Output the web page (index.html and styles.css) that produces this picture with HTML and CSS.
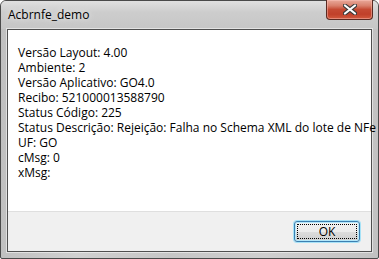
FILE: index.html
```html
<!DOCTYPE html>
<html>
<head>
<meta charset="utf-8">
<link rel="stylesheet" href="styles.css">
</head>
<body>
<div class="window">
  <div class="titlebar">
    <span class="title">Acbrnfe_demo</span>
    <div class="close">
      <svg width="14" height="11" viewBox="0 0 14 11">
        <path d="M2 1.5 L12 9.5 M12 1.5 L2 9.5" stroke="#3a3a3a" stroke-width="4.2" stroke-linecap="round"/>
        <path d="M2 1.5 L12 9.5 M12 1.5 L2 9.5" stroke="#ffffff" stroke-width="2.2" stroke-linecap="round"/>
      </svg>
    </div>
  </div>
  <div class="client">
    <div class="message">
      <div>Versão Layout: 4.00</div>
      <div>Ambiente: 2</div>
      <div>Versão Aplicativo: GO4.0</div>
      <div>Recibo: 521000013588790</div>
      <div>Status Código: 225</div>
      <div>Status Descrição: Rejeição: Falha no Schema XML do lote de NFe</div>
      <div>UF: GO</div>
      <div>cMsg: 0</div>
      <div>xMsg:</div>
    </div>
    <div class="footer">
      <button class="ok"><span class="focus">OK</span></button>
    </div>
  </div>
</div>
</body>
</html>
```
FILE: styles.css
```css
html, body {
  margin: 0;
  padding: 0;
  background: #ffffff;
}
body {
  width: 379px;
  height: 259px;
  overflow: hidden;
  font-family: "Open Sans", "Noto Sans", sans-serif;
  font-size: 12px;
  color: #000;
}
.window {
  box-sizing: border-box;
  width: 379px;
  height: 259px;
  border: 1px solid #4a4a4a;
  border-radius: 6px 6px 2px 2px;
  background: linear-gradient(90deg, #c0c0c0 0%, #d0d0d0 20%, #c6c6c6 45%, #cfcfcf 70%, #c2c2c2 100%);
  display: flex;
  flex-direction: column;
}
.titlebar {
  height: 28px;
  display: flex;
  justify-content: space-between;
  align-items: flex-start;
  padding: 0 5px 0 7px;
  background: linear-gradient(180deg, #e0e0e0 0%, #cdcdcd 40%, #c6c6c6 100%);
  border-radius: 5px 5px 0 0;
}
.title {
  margin-top: 6px;
  font-size: 12px;
  line-height: 16px;
  color: #000;
  text-shadow: 0 0 6px rgba(255,255,255,0.9);
}
.close {
  width: 47px;
  height: 20px;
  margin-top: -1px;
  box-sizing: border-box;
  border: 1px solid #5a2a22;
  border-top: none;
  border-radius: 0 0 4px 4px;
  background: linear-gradient(180deg, #e9a99a 0%, #d9806c 30%, #c54a33 50%, #c0402a 75%, #d25a3e 100%);
  box-shadow: inset 0 0 0 1px rgba(255,200,190,0.45);
  display: flex;
  align-items: center;
  justify-content: center;
}
.close svg { display: block; }
.client {
  flex: 1;
  margin: 0 6px 6px 6px;
  border: 1px solid #4f4f4f;
  display: flex;
  flex-direction: column;
  box-shadow: 0 0 0 1px rgba(255,255,255,0.5);
}
.message {
  flex: 1;
  background: #ffffff;
  padding: 15px 0 0 10px;
  line-height: 15px;
  border-bottom: 1px solid #dfdfdf;
  white-space: nowrap;
}
.footer {
  height: 39px;
  background: #f0f0f0;
  display: flex;
  justify-content: flex-end;
  align-items: flex-start;
  padding: 9px 11px 0 0;
  box-sizing: border-box;
}
.ok {
  width: 66px;
  height: 21px;
  margin: 0;
  padding: 2px;
  box-sizing: border-box;
  border: 1px solid #3c7fb1;
  border-radius: 3px;
  background: linear-gradient(180deg, #f2f2f2 0%, #ebebeb 50%, #dddddd 51%, #cfcfcf 100%);
  box-shadow: 0 0 0 1px #a6e2f7, inset 0 0 0 1px #b3e7fa;
  font-family: "Open Sans", "Noto Sans", sans-serif;
  font-size: 12px;
  color: #000;
  display: flex;
}
.focus {
  flex: 1;
  border: 1px dotted #000;
  display: flex;
  align-items: center;
  justify-content: center;
  line-height: 13px;
}
```
